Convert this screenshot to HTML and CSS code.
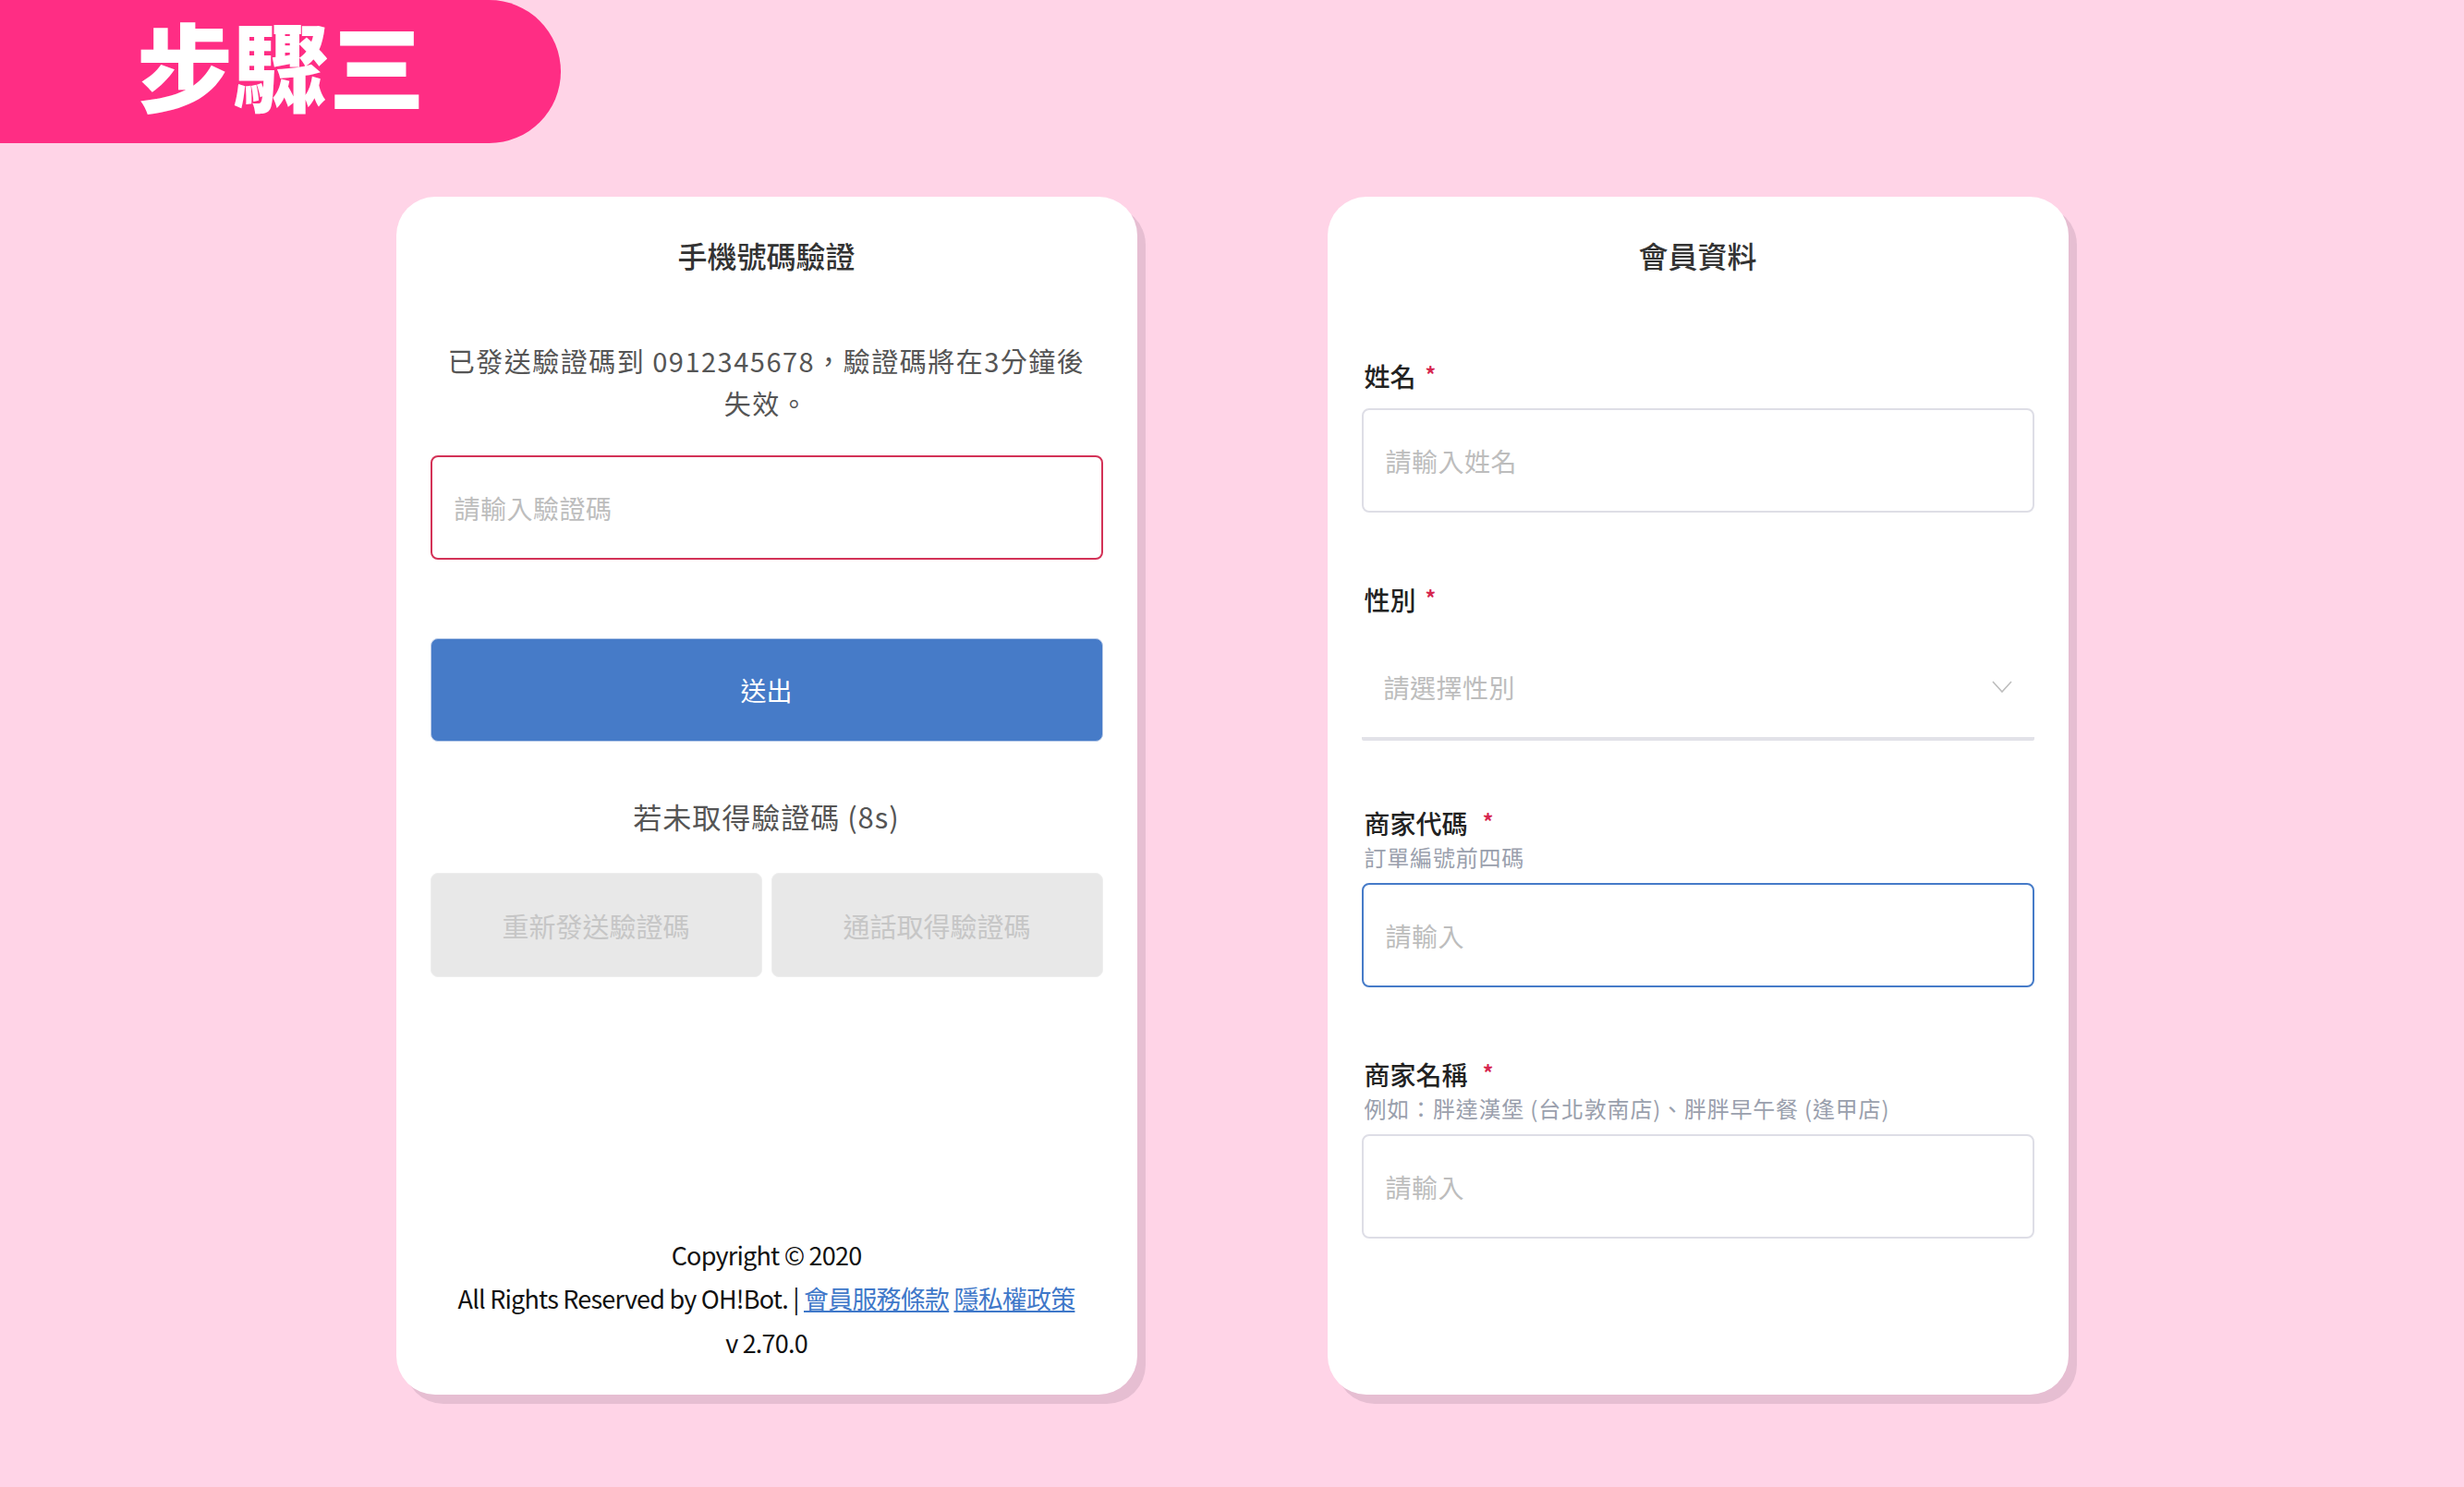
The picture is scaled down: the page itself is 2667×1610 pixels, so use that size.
FILE: index.html
```html
<!DOCTYPE html>
<html lang="zh-Hant">
<head>
    <meta charset="UTF-8">
    <meta name="viewport" content="width=device-width, initial-scale=1.0">
    <title>步驟三</title>
    <link rel="stylesheet" href="styles.css">
</head>
<body>
    <!-- Label step di pojok kiri atas -->
    <div class="banner">
        <h1>步驟三</h1>
    </div>

    <div class="cards">
        <!-- Kartu verifikasi nomor HP -->
        <section class="card">
            <h2 class="card-title">手機號碼驗證</h2>
            <p class="msg">已發送驗證碼到 0912345678，驗證碼將在3分鐘後<br>失效。</p>
            <input class="input input-error input-verify" type="text" placeholder="請輸入驗證碼">
            <button class="btn-submit">送出</button>
            <p class="countdown">若未取得驗證碼 (8s)</p>
            <div class="resend">
                <button class="btn-disabled" disabled>重新發送驗證碼</button>
                <button class="btn-disabled" disabled>通話取得驗證碼</button>
            </div>
            <footer class="card-footer">
                <p>Copyright © 2020</p>
                <p>All Rights Reserved by OH!Bot. | <a href="#">會員服務條款</a> <a href="#">隱私權政策</a></p>
                <p>v 2.70.0</p>
            </footer>
        </section>

        <!-- Kartu data member -->
        <section class="card">
            <h2 class="card-title">會員資料</h2>
            <div class="form">
                <div class="field">
                    <label class="label">姓名<span class="req">*</span></label>
                    <input class="input" type="text" placeholder="請輸入姓名">
                </div>
                <div class="field field-select">
                    <label class="label">性別<span class="req">*</span></label>
                    <div class="select">
                        <span>請選擇性別</span>
                        <svg width="22" height="13" viewBox="0 0 22 13"><path d="M1 1 L11 12 L21 1" fill="none" stroke="#bdbdbd" stroke-width="1.6"/></svg>
                    </div>
                </div>
                <div class="field">
                    <label class="label">商家代碼 <span class="req">*</span></label>
                    <p class="hint">訂單編號前四碼</p>
                    <input class="input input-focus" type="text" placeholder="請輸入">
                </div>
                <div class="field">
                    <label class="label">商家名稱 <span class="req">*</span></label>
                    <p class="hint">例如：胖達漢堡 (台北敦南店)、胖胖早午餐 (逢甲店)</p>
                    <input class="input" type="text" placeholder="請輸入">
                </div>
            </div>
        </section>
    </div>
</body>
</html>
```

FILE: styles.css
```css
/* Gaya umum halaman */
body {
    margin: 0;
    min-height: 1610px;
    background-color: #ffd4e7;
    font-family: "Noto Sans CJK TC", "Noto Sans", sans-serif;
}

p {
    margin: 0;
}

/* Label step pink */
.banner {
    width: 607px;
    height: 155px;
    box-sizing: border-box;
    padding-left: 148px;
    padding-bottom: 16px;
    background-color: #ff2d84;
    border-radius: 0 78px 78px 0;
    display: flex;
    align-items: center;
}

.banner h1 {
    margin: 0;
    color: #fff;
    font-size: 104px;
    font-weight: 900;
    line-height: 1.2;
}

/* Dua kartu berdampingan */
.cards {
    display: flex;
    justify-content: center;
    gap: 206px;
    margin-top: 58px;
}

.card {
    width: 802px;
    height: 1297px;
    box-sizing: border-box;
    padding: 39px 37px 33px;
    background-color: #fff;
    border-radius: 42px;
    box-shadow: 9px 10px 0 #e6bed2;
    display: flex;
    flex-direction: column;
}

.card-title {
    margin: 0;
    text-align: center;
    font-size: 32px;
    font-weight: 500;
    line-height: 48px;
    color: #333;
}

.msg {
    margin-top: 67px;
    text-align: center;
    font-size: 29px;
    line-height: 46px;
    letter-spacing: 1.5px;
    color: #555;
}

/* Input teks */
.input {
    display: block;
    width: 100%;
    height: 113px;
    box-sizing: border-box;
    padding: 0 24px;
    border: 2px solid #dedee6;
    border-radius: 8px;
    font-family: inherit;
    font-size: 28px;
    letter-spacing: 0.5px;
    color: #333;
    outline: none;
}

.input::placeholder {
    color: #bdbdbd;
}

.input-error {
    border-color: #d33257;
}

.input-focus {
    border-color: #467bc8;
}

.input-verify {
    margin-top: 34px;
}

.btn-submit {
    margin-top: 85px;
    height: 112px;
    border: 1px solid #b9cbe8;
    border-radius: 8px;
    background-color: #467bc8;
    color: #fff;
    font-family: inherit;
    font-size: 28px;
}

.countdown {
    margin-top: 58px;
    text-align: center;
    font-size: 31px;
    line-height: 46px;
    letter-spacing: 1px;
    color: #555;
}

.resend {
    margin-top: 38px;
    display: grid;
    grid-template-columns: 1fr 1fr;
    gap: 10px;
}

.btn-disabled {
    height: 113px;
    border: 1px solid #eeeeee;
    border-radius: 8px;
    background-color: #e8e8e8;
    color: #c6c6c6;
    font-family: inherit;
    font-size: 29px;
}

/* Footer kartu kiri */
.card-footer {
    margin-top: auto;
    text-align: center;
    font-size: 27px;
    letter-spacing: -0.8px;
    line-height: 47.5px;
    color: #111;
}

.card-footer a {
    color: #3f78c9;
}

/* Form kartu kanan */
.form {
    margin-top: 87px;
}

.field {
    margin-bottom: 74px;
}

.field-select {
    margin-bottom: 69px;
}

.label {
    display: block;
    padding-left: 3px;
    font-size: 28px;
    font-weight: 500;
    line-height: 40px;
    color: #222;
    margin-bottom: 15px;
}

.req {
    margin-left: 10px;
    color: #d6264f;
    font-size: 23px;
    font-weight: 700;
    line-height: 0;
    vertical-align: 4px;
}

.hint {
    margin-top: -15px;
    margin-bottom: 11px;
    padding-left: 3px;
    font-size: 24px;
    line-height: 34px;
    letter-spacing: 0.8px;
    color: #9aa0ad;
}

.select {
    margin-top: 20px;
    height: 113px;
    box-sizing: border-box;
    padding: 0 24px;
    border-bottom: 4px solid #e2e2e8;
    border-radius: 2px;
    display: flex;
    align-items: center;
    justify-content: space-between;
    font-size: 28px;
    letter-spacing: 0.5px;
    color: #bdbdbd;
}
```
